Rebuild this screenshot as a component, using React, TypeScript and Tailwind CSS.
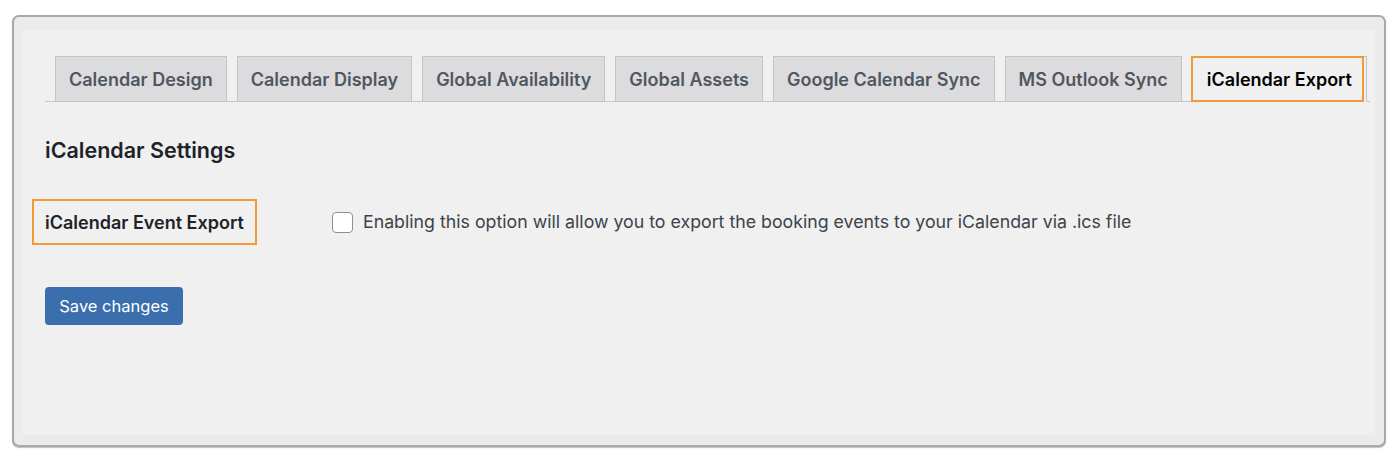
const tabs = [
  "Calendar Design",
  "Calendar Display",
  "Global Availability",
  "Global Assets",
  "Google Calendar Sync",
  "MS Outlook Sync",
];

export default function App() {
  return (
    <div
      className="w-[1400px] h-[457px] bg-white pt-[15px] pl-[12px]"
      style={{ fontFamily: "Inter, 'Liberation Sans', sans-serif" }}
    >
      <div className="w-[1374px] h-[432px] rounded-[7px] border-2 border-[#a9a9a9] bg-[#ebebeb] pt-[13px] pl-[8px] pr-[9px] pb-[10px] shadow-[0_1px_1px_rgba(0,0,0,0.25)]">
        <div className="h-full bg-[#f0f0f1] pl-[23px] pr-[5px] pt-[26px]">
          {/* tabs */}
          <div className="flex items-end border-b border-[#c3c4c7] pl-[10px] gap-[10px]">
            {tabs.map((t) => (
              <div
                key={t}
                className="h-[46px] -mb-px flex items-center px-[13px] bg-[#dcdcde] border border-[#c3c4c7] text-[18px] font-semibold text-[#50575e]"
              >
                {t}
              </div>
            ))}
            <div className="relative h-[46px] -mb-px flex items-center px-[14px] bg-[#f0f0f1] border border-[#c3c4c7] border-b-[#f0f0f1] text-[18px] font-semibold text-black">
              <span className="absolute -left-[2px] -top-[1px] right-[2px] -bottom-px border-2 border-[#f09a3a]" />
              iCalendar Export
            </div>
          </div>

          {/* heading */}
          <h2 className="mt-[34px] text-[21.5px] leading-[28px] font-semibold text-[#1d2327]">
            iCalendar Settings
          </h2>

          {/* option row */}
          <div className="mt-[35px] flex items-center">
            <div className="w-[287px]">
              <div className="-ml-[13px] inline-flex items-center h-[46px] px-[11px] border-2 border-[#f09a3a] text-[18px] font-semibold text-[#1d2327]">
                iCalendar Event Export
              </div>
            </div>
            <label className="flex items-center gap-[10px] text-[17.75px] text-[#3c434a]">
              <span className="w-[21px] h-[21px] rounded-[4px] border border-[#8c8f94] bg-white" />
              Enabling this option will allow you to export the booking events to your iCalendar via .ics file
            </label>
          </div>

          {/* save */}
          <button className="mt-[42px] h-[38px] w-[138px] rounded-[4px] bg-[#3a6ead] text-white text-[16.5px] flex items-center justify-center">
            Save changes
          </button>
        </div>
      </div>
    </div>
  );
}
